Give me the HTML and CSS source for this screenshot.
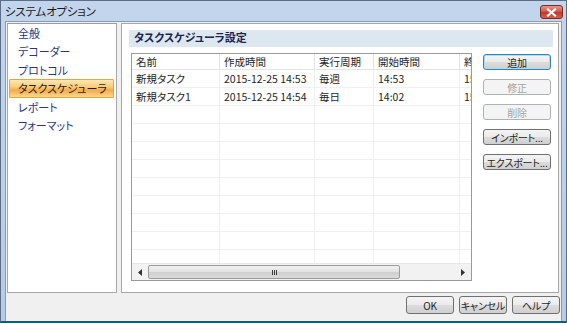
FILE: index.html
```html
<!DOCTYPE html>
<html lang="ja">
<head>
<meta charset="utf-8">
<link rel="stylesheet" href="styles.css">
</head>
<body>
<div class="window">
  <div class="titlebar">
    <span class="title">システムオプション</span>
    <div class="close"><svg width="11" height="9" viewBox="0 0 11 9"><path d="M2 1.5 L9 7.5 M9 1.5 L2 7.5" stroke="#fff" stroke-width="2.2" stroke-linecap="square"/></svg></div>
  </div>
  <div class="client">
    <div class="main">
      <div class="nav">
        <div class="nav-item">全般</div>
        <div class="nav-item">デコーダー</div>
        <div class="nav-item">プロトコル</div>
        <div class="nav-item selected">タスクスケジューラ</div>
        <div class="nav-item">レポート</div>
        <div class="nav-item">フォーマット</div>
      </div>
      <div class="panel">
        <div class="section">タスクスケジューラ設定</div>
        <div class="body">
          <div class="listview">
            <div class="grid">
              <div class="row head">
                <div class="c c1">名前</div><div class="c c2">作成時間</div><div class="c c3">実行周期</div><div class="c c4">開始時間</div><div class="c c5">終了時間</div>
              </div>
              <div class="row">
                <div class="c c1">新規タスク</div><div class="c c2">2015-12-25 14:53</div><div class="c c3">毎週</div><div class="c c4">14:53</div><div class="c c5">15:53</div>
              </div>
              <div class="row">
                <div class="c c1">新規タスク1</div><div class="c c2">2015-12-25 14:54</div><div class="c c3">毎日</div><div class="c c4">14:02</div><div class="c c5">15:02</div>
              </div>
              <div class="row"><div class="c c1"></div><div class="c c2"></div><div class="c c3"></div><div class="c c4"></div><div class="c c5"></div></div>
              <div class="row"><div class="c c1"></div><div class="c c2"></div><div class="c c3"></div><div class="c c4"></div><div class="c c5"></div></div>
              <div class="row"><div class="c c1"></div><div class="c c2"></div><div class="c c3"></div><div class="c c4"></div><div class="c c5"></div></div>
              <div class="row"><div class="c c1"></div><div class="c c2"></div><div class="c c3"></div><div class="c c4"></div><div class="c c5"></div></div>
              <div class="row"><div class="c c1"></div><div class="c c2"></div><div class="c c3"></div><div class="c c4"></div><div class="c c5"></div></div>
              <div class="row"><div class="c c1"></div><div class="c c2"></div><div class="c c3"></div><div class="c c4"></div><div class="c c5"></div></div>
              <div class="row"><div class="c c1"></div><div class="c c2"></div><div class="c c3"></div><div class="c c4"></div><div class="c c5"></div></div>
              <div class="row"><div class="c c1"></div><div class="c c2"></div><div class="c c3"></div><div class="c c4"></div><div class="c c5"></div></div>
              <div class="row"><div class="c c1"></div><div class="c c2"></div><div class="c c3"></div><div class="c c4"></div><div class="c c5"></div></div>
              <div class="row"><div class="c c1"></div><div class="c c2"></div><div class="c c3"></div><div class="c c4"></div><div class="c c5"></div></div>
            </div>
            <div class="hscroll">
              <div class="arrow"><svg width="4" height="7" viewBox="0 0 4 7"><path d="M4 0 L0 3.5 L4 7 Z" fill="#333"/></svg></div>
              <div class="track">
                <div class="thumb"><span class="grip"></span><span class="grip"></span><span class="grip"></span></div>
              </div>
              <div class="arrow"><svg width="4" height="7" viewBox="0 0 4 7"><path d="M0 0 L4 3.5 L0 7 Z" fill="#333"/></svg></div>
            </div>
          </div>
          <div class="actions">
            <button class="btn default">追加</button>
            <button class="btn disabled">修正</button>
            <button class="btn disabled">削除</button>
            <button class="btn">インポート...</button>
            <button class="btn">エクスポート...</button>
          </div>
        </div>
      </div>
    </div>
    <div class="footer">
      <button class="btn fbtn">OK</button>
      <button class="btn fbtn">キャンセル</button>
      <button class="btn fbtn">ヘルプ</button>
    </div>
  </div>
</div>
</body>
</html>
```
FILE: styles.css
```css
* { box-sizing: border-box; }
html, body { margin: 0; padding: 0; }
body {
  width: 567px;
  height: 323px;
  overflow: hidden;
  font-family: "Noto Sans CJK JP", "Noto Sans", sans-serif;
  font-size: 11px;
  font-feature-settings: "palt";
  color: #1e1e1e;
}
.window {
  width: 567px;
  height: 323px;
  display: flex;
  flex-direction: column;
  background: linear-gradient(#c2d5ec, #b5cbe6);
  border-left: 1px solid #5b6e86;
  border-right: 1px solid #5b6e86;
  border-top: 1px solid #5b6e86;
  border-bottom: 2px solid #1d5a6a;
}
.titlebar {
  height: 20px;
  flex: none;
  display: flex;
  align-items: center;
  justify-content: space-between;
  padding: 0 3px 0 4px;
}
.title {
  font-size: 11.5px;
  color: #1a1a1a;
  letter-spacing: -0.2px;
}
.close {
  width: 23px;
  height: 14px;
  margin-top: 2px;
  border: 1px solid #7d2a22;
  border-radius: 3px;
  background: linear-gradient(#e59a8d, #d1594a 45%, #c13a2b 55%, #d4604f);
  display: flex;
  align-items: center;
  justify-content: center;
}
.client {
  flex: 1;
  margin: 0 4px 0 4px;
  background: #f0f0f0;
  border: 1px solid #8a9bb0;
  border-bottom: none;
  display: flex;
  flex-direction: column;
}
.main {
  height: 271px;
  flex: none;
  display: flex;
  gap: 4px;
  padding: 1px 2px 0 1px;
}
.nav {
  width: 110px;
  background: #fff;
  border: 1px solid #a7a7a7;
  border-top-color: #9c9c9c;
  padding: 0 2px 0 1px;
}
.nav-item {
  height: 18.4px;
  line-height: 18px;
  padding-left: 9px;
  color: #2b3580;
  font-size: 11px;
}
.nav-item.selected {
  color: #1e1e1e;
  border: 1px solid #e5a53c;
  border-radius: 1px;
  line-height: 16px;
  padding-left: 8px;
  background: linear-gradient(#fde8b5, #fbcd78 40%, #f8a94a 60%, #fbd98c);
}
.panel {
  flex: 1;
  background: #fff;
  border: 1px solid #a7a7a7;
  padding: 6px 5px 0 7px;
  display: flex;
  flex-direction: column;
}
.section {
  height: 17px;
  line-height: 15px;
  background: #dde7f0;
  padding-left: 5px;
  font-weight: bold;
  font-size: 11px;
  color: #1b2450;
}
.body {
  display: flex;
  gap: 11px;
  padding: 6px 0 0 2px;
}
.listview {
  width: 341px;
  height: 228px;
  border: 1px solid #9a9a9a;
  display: flex;
  flex-direction: column;
  overflow: hidden;
}
.grid {
  flex: 1;
  overflow: hidden;
}
.row {
  display: flex;
  height: 18px;
  border-bottom: 1px solid #f0f0f0;
  white-space: nowrap;
}
.row.head {
  height: 16px;
  border-bottom: 1px solid #e5e5e5;
}
.c {
  flex: none;
  border-right: 1px solid #eeeeee;
  padding-left: 4px;
  line-height: 17px;
  overflow: hidden;
  font-size: 10.5px;
}
.head .c { line-height: 15px; border-right-color: #e3e3e3; }
.c1 { width: 88px; }
.c2 { width: 95px; }
.c3 { width: 59px; }
.c4 { width: 86px; }
.c5 { width: 60px; }
.hscroll {
  height: 17px;
  flex: none;
  display: flex;
  background: #f2f2f2;
  border-top: 1px solid #e8e8e8;
}
.arrow {
  width: 16px;
  display: flex;
  align-items: center;
  justify-content: center;
}
.track {
  flex: 1;
  padding: 1px 55px 1px 0;
}
.thumb {
  height: 100%;
  border: 1px solid #9b9b9b;
  border-radius: 2px;
  background: linear-gradient(#f1f1f1, #e2e2e2 50%, #cfcfcf 51%, #dadada);
  display: flex;
  justify-content: center;
  align-items: center;
  gap: 1px;
}
.grip {
  width: 1px;
  height: 5px;
  background: #3a3a3a;
}
.actions {
  width: 68px;
  display: flex;
  flex-direction: column;
  gap: 9px;
  padding-top: 1px;
}
.btn {
  height: 16px;
  padding: 0;
  font-family: inherit;
  font-size: 10px;
  letter-spacing: -0.2px;
  white-space: nowrap;
  font-feature-settings: "palt";
  color: #1e1e1e;
  border: 1px solid #707070;
  border-radius: 3px;
  background: linear-gradient(#f4f4f4, #ebebeb 50%, #dddddd 51%, #cfcfcf);
  line-height: 13px;
}
.btn.default {
  border-color: #3c7fb1;
  box-shadow: inset 0 0 0 1px #a9dcf5;
}
.btn.disabled {
  color: #a3a3a3;
  border-color: #adb2b5;
  background: #f4f4f4;
}
.footer {
  flex: 1;
  display: flex;
  justify-content: flex-end;
  align-items: flex-start;
  gap: 5px;
  padding: 3px 1px 0 0;
}
.fbtn {
  width: 48px;
  height: 18px;
  line-height: 15px;
}
```
